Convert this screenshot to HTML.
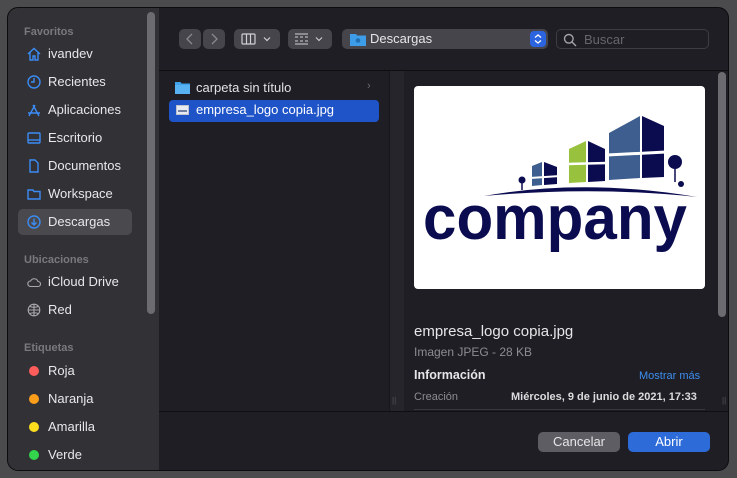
<!DOCTYPE html>
<html><head><meta charset="utf-8"><style>
*{margin:0;padding:0;box-sizing:border-box}
body{width:737px;height:478px;background:#4b4b4d;font-family:"Liberation Sans",sans-serif;position:relative;overflow:hidden;color:#e6e6e8}
.win{position:absolute;left:7px;top:7px;width:722px;height:464px;border-radius:11px;background:#1f1e24;border:1px solid #0c0c0e;overflow:hidden}
.side{position:absolute;left:0;top:0;width:151px;height:100%;background:#323136}
.sb{position:absolute;left:139px;top:4px;width:8px;height:302px;border-radius:4px;background:#6c6b70}
.hd{position:absolute;left:16px;font-size:11px;font-weight:bold;color:#7a797e}
.it{position:absolute;left:10px;width:114px;height:26px;font-size:13px;color:#e8e8ea;line-height:26px;padding-left:30px;border-radius:5px}
.it.sel{background:#4a494e}
.ic{position:absolute;left:9px;top:6px;width:14px;height:14px}
.dot{position:absolute;left:11px;top:8px;width:10px;height:10px;border-radius:50%}
.t{position:absolute;white-space:nowrap}
.btn{position:absolute;height:20px;border-radius:5px;background:#46454b}
</style></head><body>
<div class="win">
 <div class="side">
  <div class="sb"></div>
  <div class="hd" style="top:18px">Favoritos</div>
  <div class="it" style="top:33px"><svg class="ic" viewBox="0 0 14 14" fill="none" stroke="#3b8cf5" stroke-width="1.4"><path d="M1 7L7 1.5 13 7M3 5.5V13h3V9h2v4h3V5.5"/></svg>ivandev</div>
  <div class="it" style="top:61px"><svg class="ic" viewBox="0 0 14 14" fill="none" stroke="#3b8cf5" stroke-width="1.4"><circle cx="7" cy="7" r="6"/><path d="M7 3v4H4"/></svg>Recientes</div>
  <div class="it" style="top:89px"><svg class="ic" viewBox="0 0 14 14" fill="none" stroke="#3b8cf5" stroke-width="1.4"><path d="M2 13L8 2M12 13L6 2M1 10h12"/></svg>Aplicaciones</div>
  <div class="it" style="top:117px"><svg class="ic" viewBox="0 0 14 14" fill="none" stroke="#3b8cf5" stroke-width="1.4"><rect x="1" y="2" width="12" height="10" rx="1"/><path d="M1 9h12"/></svg>Escritorio</div>
  <div class="it" style="top:145px"><svg class="ic" viewBox="0 0 14 14" fill="none" stroke="#3b8cf5" stroke-width="1.4"><path d="M3 1h5l3 3v9H3z"/></svg>Documentos</div>
  <div class="it" style="top:173px"><svg class="ic" viewBox="0 0 14 14" fill="none" stroke="#3b8cf5" stroke-width="1.4"><path d="M1 3h5l1 1.5h6V12H1z"/></svg>Workspace</div>
  <div class="it sel" style="top:201px"><svg class="ic" viewBox="0 0 14 14" fill="none" stroke="#3b8cf5" stroke-width="1.4"><circle cx="7" cy="7" r="6"/><path d="M7 3.5v6M4.5 7.5L7 10l2.5-2.5"/></svg>Descargas</div>
  <div class="hd" style="top:246px">Ubicaciones</div>
  <div class="it" style="top:261px"><svg class="ic" viewBox="0 0 14 14" fill="none" stroke="#a9a8ad" stroke-width="1.1"><path d="M3.5 11.5h7.5a2.5 2.5 0 0 0 0-5A4 4 0 0 0 3.6 6 2.7 2.7 0 0 0 3.5 11.5z"/></svg>iCloud Drive</div>
  <div class="it" style="top:289px"><svg class="ic" viewBox="0 0 14 14" fill="none" stroke="#a9a8ad" stroke-width="1.1"><circle cx="7" cy="7" r="5.8"/><path d="M1.2 7h11.6M7 1.2v11.6M3 3.5c2 1 6 1 8 0M3 10.5c2-1 6-1 8 0"/></svg>Red</div>
  <div class="hd" style="top:334px">Etiquetas</div>
  <div class="it" style="top:350px"><span class="dot" style="background:#fe5d5c"></span>Roja</div>
  <div class="it" style="top:378px"><span class="dot" style="background:#fd9e1a"></span>Naranja</div>
  <div class="it" style="top:406px"><span class="dot" style="background:#fddf1e"></span>Amarilla</div>
  <div class="it" style="top:434px"><span class="dot" style="background:#33d54c"></span>Verde</div>
 </div>
 <div style="position:absolute;left:151px;top:62px;width:571px;height:1px;background:#0f0f12"></div>
 <div class="btn" style="left:171px;top:21px;width:22px"><svg width="22" height="20" viewBox="0 0 22 20"><path d="M13 5l-5 5 5 5" stroke="#8a898e" fill="none" stroke-width="1.3"/></svg></div>
 <div class="btn" style="left:195px;top:21px;width:22px"><svg width="22" height="20" viewBox="0 0 22 20"><path d="M9 5l5 5-5 5" stroke="#8a898e" fill="none" stroke-width="1.3"/></svg></div>
 <div class="btn" style="left:226px;top:21px;width:46px"><svg width="46" height="20" viewBox="0 0 46 20" fill="none" stroke="#d0d0d4" stroke-width="1.2"><rect x="8" y="5" width="13" height="10" rx="1"/><path d="M12.5 5v10M16.5 5v10M30 8.5l3 3 3-3"/></svg></div>
 <div class="btn" style="left:280px;top:21px;width:44px"><svg width="44" height="20" viewBox="0 0 44 20" fill="none" stroke="#d0d0d4" stroke-width="1.1"><path d="M7 5h13M7 8h3M12 8h3M17 8h3M7 12h3M12 12h3M17 12h3M7 15h13M28 8.5l3 3 3-3"/></svg></div>
 <div class="btn" style="left:334px;top:21px;width:206px"><svg style="position:absolute;left:8px;top:3px" width="16" height="14" viewBox="0 0 16 14"><path d="M0 2h6l1 1.5h9V14H0z" fill="#3d9de8"/><circle cx="8" cy="8.5" r="2.3" fill="#236fb3"/></svg><span class="t" style="left:28px;top:2px;font-size:13px;color:#e6e6e8">Descargas</span><div style="position:absolute;right:2px;top:2px;width:16px;height:16px;border-radius:4px;background:#2c64e0"><svg width="16" height="16" viewBox="0 0 16 16" fill="none" stroke="#fff" stroke-width="1.3"><path d="M5 6.5L8 4l3 2.5M5 9.5L8 12l3-2.5"/></svg></div></div>
 <div style="position:absolute;left:548px;top:21px;width:153px;height:20px;border-radius:5px;border:1px solid #3e3d42;background:#1f1e24"><svg style="position:absolute;left:6px;top:3px" width="14" height="14" viewBox="0 0 14 14" fill="none" stroke="#a4a3a8" stroke-width="1.4"><circle cx="5.8" cy="5.8" r="4.3"/><path d="M9 9l4 4"/></svg><span class="t" style="left:27px;top:2px;font-size:13px;color:#67666b">Buscar</span></div>
 <svg style="position:absolute;left:167px;top:73px" width="15" height="13" viewBox="0 0 15 13"><path d="M0 1h5.5l1 1.5H15V13H0z" fill="#3ea1e9"/><path d="M0 4h15v9H0z" fill="#58b2f2"/></svg>
 <span class="t" style="left:188px;top:72px;font-size:13px;color:#e2e2e4">carpeta sin título</span>
 <span class="t" style="left:359px;top:72px;font-size:11px;color:#6b6a6f">›</span>
 <div style="position:absolute;left:161px;top:92px;width:210px;height:22px;border-radius:4px;background:#1f54c8"></div>
 <svg style="position:absolute;left:168px;top:97px" width="13" height="10" viewBox="0 0 13 10"><rect x="0.5" y="0.5" width="12" height="9" fill="#e8eaf2" stroke="#bfc3d0"/><path d="M2 6h9" stroke="#4a5c8a" stroke-width="1.5"/></svg>
 <span class="t" style="left:188px;top:94px;font-size:13px;color:#fff">empresa_logo copia.jpg</span>
 <div style="position:absolute;left:381px;top:63px;width:15px;height:340px;background:#26252b;border-left:1px solid #17161b"></div>
 <span class="t" style="left:384px;top:388px;font-size:8px;color:#555">||</span>
 <div style="position:absolute;left:406px;top:78px;width:291px;height:203px;border-radius:4px;background:#fff;overflow:hidden">
  <svg width="291" height="203" viewBox="0 0 291 203">
   <path d="M70 110 Q170 92 283 111 Q180 100 70 110z" fill="#0b0b50"/>
   <path d="M118 80l10-4 v23l-10 1z" fill="#3d5e8e"/><path d="M130 76l13 5v17l-13 1z" fill="#0b0b50"/>
   <path d="M116 92l30-2" stroke="#fff" stroke-width="2"/>
   <path d="M155 63l17-8v41l-17 1z" fill="#98c23e"/><path d="M174 55l17 8v32l-17 1z" fill="#0b0b50"/>
   <path d="M153 78l40-1" stroke="#fff" stroke-width="2.5"/>
   <path d="M195 47l31-17v62l-31 2z" fill="#3d5e8e"/><path d="M228 30l22 10v51l-22 1z" fill="#0b0b50"/>
   <path d="M193 69l59-3" stroke="#fff" stroke-width="3"/>
   <circle cx="261" cy="76" r="7" fill="#0b0b50"/><path d="M261 81v15" stroke="#0b0b50" stroke-width="1.5"/>
   <circle cx="108" cy="94" r="3.5" fill="#0b0b50"/><path d="M108 97v7" stroke="#0b0b50" stroke-width="1.5"/>
   <circle cx="267" cy="98" r="3" fill="#0b0b50"/>
   <text x="9" y="153" font-family="Liberation Sans,sans-serif" font-weight="bold" font-size="62" fill="#0b0b50" textLength="264" lengthAdjust="spacingAndGlyphs">company</text>
  </svg>
 </div>
 <div style="position:absolute;left:710px;top:64px;width:8px;height:245px;border-radius:4px;background:#6c6b70"></div>
 <span class="t" style="left:714px;top:388px;font-size:8px;color:#555">||</span>
 <span class="t" style="left:406px;top:315px;font-size:15px;color:#e6e6e8">empresa_logo copia.jpg</span>
 <span class="t" style="left:406px;top:337px;font-size:12px;color:#8d8c91">Imagen JPEG - 28 KB</span>
 <span class="t" style="left:406px;top:360px;font-size:12.5px;font-weight:bold;color:#e6e6e8">Información</span>
 <span class="t" style="left:631px;top:362px;font-size:11px;color:#3d8ef0">Mostrar más</span>
 <span class="t" style="left:406px;top:383px;font-size:11px;color:#8d8c91">Creación</span>
 <span class="t" style="left:503px;top:383px;font-size:11px;font-weight:bold;color:#dcdcde">Miércoles, 9 de junio de 2021, 17:33</span>
 <div style="position:absolute;left:406px;top:401px;width:291px;height:1px;background:#38373c"></div>
 <div style="position:absolute;left:151px;top:403px;width:571px;height:1px;background:#0f0f12"></div>
 <div style="position:absolute;left:530px;top:424px;width:82px;height:20px;border-radius:5px;background:#5e5d63;color:#e6e6e8;font-size:13px;text-align:center;line-height:20px">Cancelar</div>
 <div style="position:absolute;left:620px;top:424px;width:82px;height:20px;border-radius:5px;background:#2c6bd8;color:#fff;font-size:13px;text-align:center;line-height:20px">Abrir</div>
</div>
</body></html>
